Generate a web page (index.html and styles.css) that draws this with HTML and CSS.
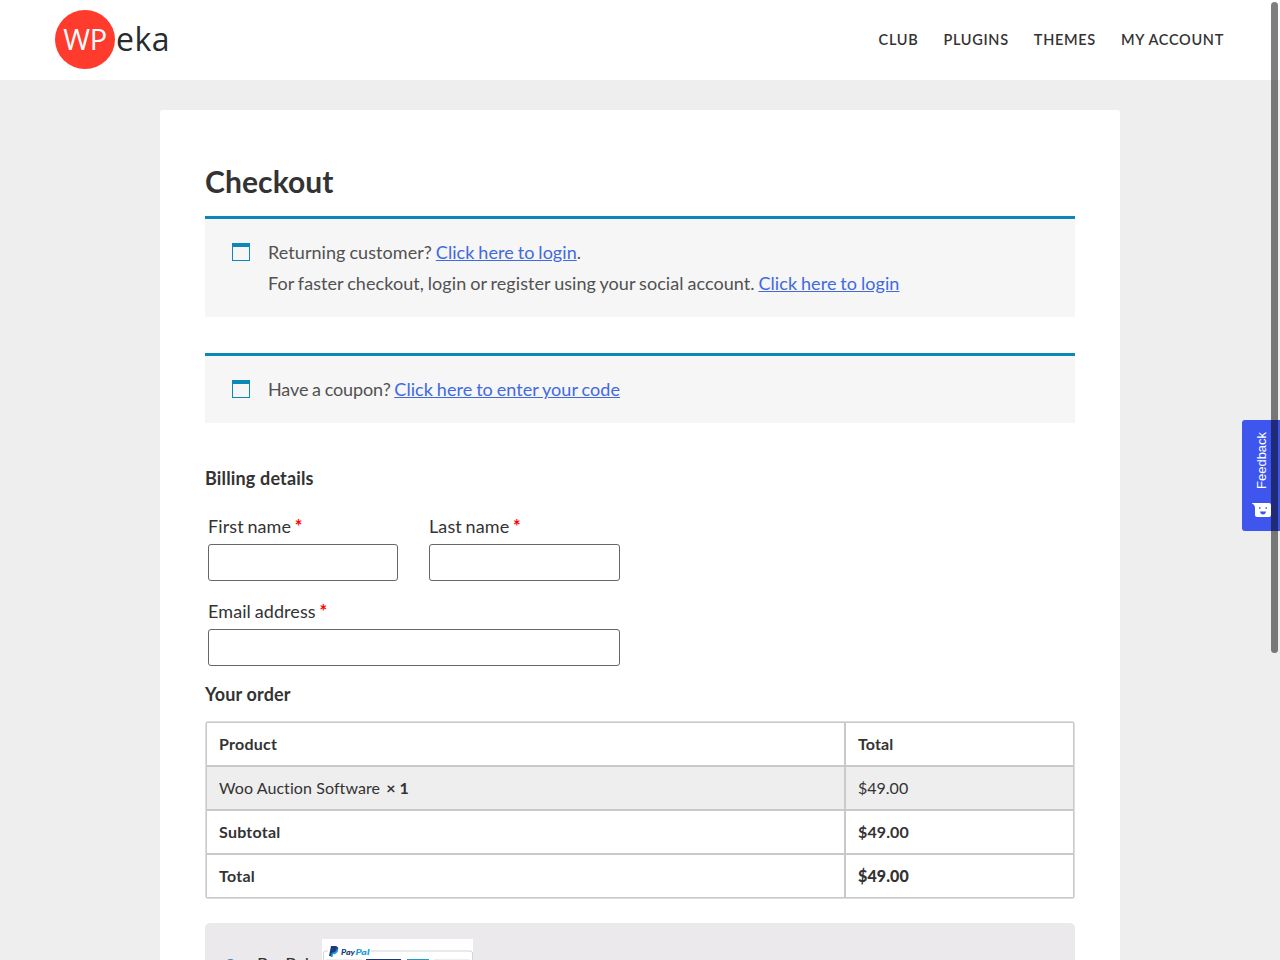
FILE: index.html
```html
<!DOCTYPE html>
<html lang="en">
<head>
<meta charset="utf-8">
<title>Checkout</title>
<link rel="stylesheet" href="styles.css">
</head>
<body>
<header class="header">
  <a class="logo"><span class="logo-disc">WP</span><span class="logo-rest">eka</span></a>
  <nav class="nav"><a>CLUB</a><a>PLUGINS</a><a>THEMES</a><a>MY ACCOUNT</a></nav>
</header>
<main class="card">
  <h1 class="title">Checkout</h1>
  <div class="notice notice-login">
    <span class="notice-icon"></span>
    <div>Returning customer? <a class="link">Click here to login</a>.<br>For faster checkout, login or register using your social account. <a class="link">Click here to login</a></div>
  </div>
  <div class="notice notice-coupon">
    <span class="notice-icon"></span>
    <div>Have a coupon? <a class="link">Click here to enter your code</a></div>
  </div>
  <h3 class="subtitle billing-title">Billing details</h3>
  <form class="fields">
    <label class="field">First name <b class="required">*</b><input class="input" type="text"></label>
    <label class="field">Last name <b class="required">*</b><input class="input" type="text"></label>
    <label class="field field-wide">Email address <b class="required">*</b><input class="input" type="text"></label>
  </form>
  <h3 class="subtitle order-title">Your order</h3>
  <table class="order">
    <tr><th class="product-col">Product</th><th>Total</th></tr>
    <tr class="item"><td><span class="item-name">Woo Auction Software</span>&nbsp; <b>× 1</b></td><td>$49.00</td></tr>
    <tr><th>Subtotal</th><th>$49.00</th></tr>
    <tr><th>Total</th><th class="grand">$49.00</th></tr>
  </table>
  <section class="payment">
    <input class="radio" type="radio" name="pay" checked>
    <span class="pay-name">PayPal</span>
    <svg class="pay-logo" width="151" height="60" viewBox="0 0 151 60">
      <rect width="151" height="60" fill="#fff"/>
      <path d="M1.5 40V14q0-2 2-2H6M49 12H148q2.500 0 2.500 2V40" fill="none" stroke="#d5d5d8"/>
      <path d="M9 7h5q3 1 2 4t-5 3l-1 3H7z" fill="#1d3a7c"/>
      <path d="M15 9q2 2 0 4.500T11 15l-.5 3H8.500l1-4 3-1q2-1 2.500-4z" fill="#159bd7"/>
      <text x="19" y="15.500" textLength="14" lengthAdjust="spacingAndGlyphs" class="brand brand-pay">Pay</text>
      <text x="33.500" y="15.500" textLength="14" lengthAdjust="spacingAndGlyphs" class="brand brand-pal">Pal</text>
      <path d="M4 20h36v30H4z" fill="#eee"/>
      <path d="M44 20h35v30H44z" fill="#1b3978"/>
      <path d="M85 20h22v30H85z" fill="#2597cd"/>
      <path d="M112 20h35v30h-35z" fill="#eee"/>
    </svg>
  </section>
</main>
<aside class="feedback">
  <span class="feedback-text">Feedback</span>
  <svg class="feedback-icon" width="20" height="15" viewBox="0 0 20 15">
    <path d="M0 0h17q2 0 2 2v10q0 2-2 2H5q-2 0-2-2V5Q3 2 0 .5z" fill="#fff"/>
    <path d="M7 5h1.500M13.500 5H15" stroke="#3e56ee" stroke-width="1.300"/>
    <path d="M8 8.500h6q-.5 3-3 3t-3-3z" fill="#3e56ee"/>
  </svg>
</aside>
<div class="scroll-thumb"></div>
</body>
</html>
```
FILE: styles.css
```css
* { box-sizing: border-box; }
html { overflow: hidden; }
body { margin: 0; height: 960px; overflow: hidden; background: #eee; color: #333; font: 18px/31px Lato, sans-serif; font-variant-ligatures: none; }
.header { height: 80px; background: #fff; display: flex; justify-content: space-between; align-items: center; padding: 0 56px 1px 55px; }
.logo { display: flex; align-items: center; font-family: "Open Sans", sans-serif; }
.logo-disc { width: 60px; height: 59px; border-radius: 50%; background: #ff3b2d; color: #fff; font-size: 29px; line-height: 57px; letter-spacing: -.3px; text-align: center; }
.logo-rest { font-size: 32px; line-height: 54px; color: #272b2e; padding-left: 1px; letter-spacing: .5px; margin-top: -2px; }
.nav { display: flex; gap: 25px; font-size: 14.500px; font-weight: 600; letter-spacing: .7px; }
.card { width: 960px; height: 850px; overflow: hidden; margin: 30px auto 0; padding: 50px 45px 0; background: #fff; border-radius: 3px 3px 0 0; }
.title { margin: 0; height: 56px; font-size: 30px; line-height: 43px; font-weight: 700; letter-spacing: .1px; }
.notice { height: 70px; margin: 0 0 36px; padding: 18px 27px; border-top: 3px solid #0b88b8; background: #f6f6f6; color: #515151; display: flex; gap: 18px; word-spacing: -.8px; letter-spacing: .065px; }
.notice-coupon { letter-spacing: -.1px; }
.notice-coupon .link { letter-spacing: .06px; }
.notice-login { height: 101px; }
.notice-icon { width: 18px; height: 18px; margin-top: 6px; border: 1px solid #0b88b8; border-top-width: 4px; }
.link { color: #4169e1; text-decoration: underline; }
.subtitle { margin: 0; font-size: 18px; line-height: 30px; font-weight: 700; letter-spacing: .15px; }
.billing-title { margin-top: 40px; }
.fields { display: grid; grid-template-columns: 190px 191px; column-gap: 31px; row-gap: 14px; margin: 18px 3px 0; }
.field { display: block; height: 71px; word-spacing: -1px; letter-spacing: .1px; }
.field-wide { grid-column: 1 / 3; }
.required { color: #f00; }
.input { display: block; width: 100%; height: 37px; margin: 2px 0 0; border: 1px solid #666; border-radius: 3px; background: #fff; }
.order-title { margin-top: 12px; }
.order { width: 870px; height: 178px; margin-top: 12px; border-collapse: separate; border-spacing: 0; border: 1px solid #ddd; border-radius: 3px; font-size: 16px; line-height: 24px; table-layout: fixed; }
.order th, .order td { height: 44px; padding: 0 12px; text-align: left; border: 1px solid #c9c9c9; }
.order th { letter-spacing: .1px; }
.order th:first-child { letter-spacing: .25px; }
.product-col { width: 639px; }
.item { background: #eee; }
.item-name { letter-spacing: .08px; }
.item b { margin-left: -2px; }
.order .grand { font-weight: 900; letter-spacing: .1px; }
.payment { display: flex; align-items: flex-start; height: 140px; margin-top: 24px; padding: 16px 18px; background: #ebe9eb; border-radius: 5px; }
.radio { width: 13px; height: 13px; margin: 20px 20px 0 1px; accent-color: #1976d2; }
.pay-name { width: 65px; padding-top: 10px; }
.brand { font: italic 900 8px Lato, sans-serif; }
.brand-pay { fill: #1d3a7c; }
.brand-pal { fill: #159bd7; }
.feedback { position: fixed; top: 420px; right: 0; width: 38px; height: 111px; padding: 11px 8px; background: #3e56ee; border-radius: 3px 0 0 3px; color: #fff; }
.feedback-text { display: block; writing-mode: vertical-rl; transform: rotate(180deg); font: 13px/22px "Liberation Sans", sans-serif; height: 58px; margin-left: 1px; }
.feedback-icon { display: block; margin: 14px 0 0 2px; }
.scroll-thumb { position: fixed; top: 2px; left: 1271px; width: 7px; height: 651px; border-radius: 4px; background: rgba(0, 0, 0, .5); }
```
